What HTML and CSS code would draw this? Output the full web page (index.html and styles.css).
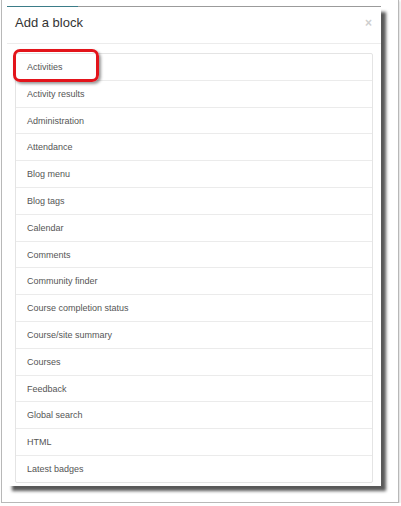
FILE: index.html
```html
<!DOCTYPE html>
<html lang="en">
<head>
  <meta charset="UTF-8">
  <meta name="viewport" content="width=device-width, initial-scale=1.0">
  <title>Add a block</title>
  <link rel="stylesheet" href="styles.css">
</head>
<body>
  <div class="frame">
    <div class="topline">
      <span class="topline-active"></span>
      <span class="topline-rest"></span>
    </div>
    <div class="modal">
      <div class="modal-header">
        <h3 class="title">Add a block</h3>
        <span class="close">&times;</span>
      </div>
      <div class="modal-body">
        <ul class="block-list">
          <li>Activities</li>
          <li>Activity results</li>
          <li>Administration</li>
          <li>Attendance</li>
          <li>Blog menu</li>
          <li>Blog tags</li>
          <li>Calendar</li>
          <li>Comments</li>
          <li>Community finder</li>
          <li>Course completion status</li>
          <li>Course/site summary</li>
          <li>Courses</li>
          <li>Feedback</li>
          <li>Global search</li>
          <li>HTML</li>
          <li>Latest badges</li>
        </ul>
        <div class="highlight"></div>
      </div>
    </div>
  </div>
</body>
</html>
```

FILE: styles.css
```css
body {
  margin: 0;
  background: #fff;
  font-family: "Liberation Sans", Arial, sans-serif;
}
.frame {
  margin-left: 1px;
  width: 391px;
  height: 496px;
  padding: 6px 0 0 5px;
  border: 1px solid #b8b8b8;
  border-top: none;
  box-shadow: 1px 1px 2px rgba(0, 0, 0, 0.15);
  background: #fff;
}
.topline {
  display: flex;
  width: 374px;
  height: 1px;
}
.topline-active {
  width: 71px;
  background: #3b7c88;
}
.topline-rest {
  flex: 1;
  background: #9b9b9b;
}
.modal {
  width: 374px;
  height: 479px;
  background: #fff;
  box-shadow: 5px 5px 3px rgba(0, 0, 0, 0.65);
  overflow: hidden;
}
.modal-header {
  display: flex;
  justify-content: space-between;
  align-items: flex-start;
  height: 37px;
  padding: 8px 9px 0 8px;
  box-sizing: border-box;
  border-bottom: 1px solid #ececec;
}
.title {
  margin: 0;
  font-size: 13px;
  font-weight: normal;
  line-height: 15px;
  color: #333;
}
.close {
  font-size: 12px;
  line-height: 12px;
  font-weight: bold;
  color: #cfcfcf;
  margin-top: 2px;
}
.modal-body {
  position: relative;
  padding: 9px 8px;
}
.block-list {
  list-style: none;
  margin: 0;
  padding: 0;
  border: 1px solid #e4e4e4;
  border-radius: 2px;
}
.block-list li {
  height: 25.8px;
  line-height: 27px;
  padding-left: 11px;
  font-size: 9px;
  color: #555;
  border-top: 1px solid #ebebeb;
}
.block-list li:first-child {
  border-top: none;
}
.highlight {
  position: absolute;
  left: 6px;
  top: 5px;
  width: 80px;
  height: 27px;
  border: 3px solid #e3141b;
  border-radius: 7px;
  box-shadow: 2px 2px 3px rgba(0, 0, 0, 0.4);
}
```
